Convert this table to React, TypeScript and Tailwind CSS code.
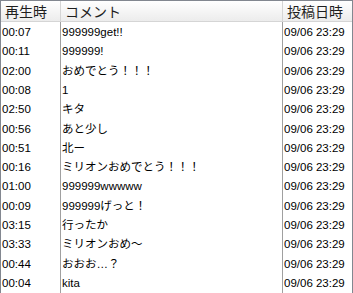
import React from 'react';

interface Comment {
  time: string;
  text: string;
  posted: string;
}

const ROWS: Comment[] = [
  { time: '00:07', text: '999999get!!', posted: '09/06 23:29' },
  { time: '00:11', text: '999999!', posted: '09/06 23:29' },
  { time: '02:00', text: 'おめでとう！！！', posted: '09/06 23:29' },
  { time: '00:08', text: '1', posted: '09/06 23:29' },
  { time: '02:50', text: 'キタ', posted: '09/06 23:29' },
  { time: '00:56', text: 'あと少し', posted: '09/06 23:29' },
  { time: '00:51', text: '北ー', posted: '09/06 23:29' },
  { time: '00:16', text: 'ミリオンおめでとう！！！', posted: '09/06 23:29' },
  { time: '01:00', text: '999999wwwww', posted: '09/06 23:29' },
  { time: '00:09', text: '999999げっと！', posted: '09/06 23:29' },
  { time: '03:15', text: '行ったか', posted: '09/06 23:29' },
  { time: '03:33', text: 'ミリオンおめ～', posted: '09/06 23:29' },
  { time: '00:44', text: 'おおお…？', posted: '09/06 23:29' },
  { time: '00:04', text: 'kita', posted: '09/06 23:29' },
];

const HEAD_FONT = "font-['Noto_Sans_CJK_JP',sans-serif]";
const BODY_FONT = "font-['Liberation_Sans','Noto_Sans_CJK_JP',sans-serif]";
const HEAD = 'h-[20px] flex items-center px-[4px] text-[14px] text-[#1e1e1e] border-r border-[#d5d5d5]';
const CELL = 'h-[19.3px] flex items-center px-[1px] text-[11.5px] text-black whitespace-nowrap overflow-hidden';

export default function App() {
  return (
    <div className="w-[353px] h-[293px] bg-white border-l border-t border-r border-[#828790] overflow-hidden">
      <div className={`grid grid-cols-[60px_222px_1fr] bg-gradient-to-b from-white to-[#ececec] border-b border-[#d5d5d5] ${HEAD_FONT}`}>
        <div className={HEAD}>再生時</div>
        <div className={HEAD}>コメント</div>
        <div className={HEAD + ' border-r-0'}>投稿日時</div>
      </div>
      <div className={`grid grid-cols-[60px_222px_1fr] ${BODY_FONT}`}>
        <div className="border-r border-[#a0a0a0] pt-[1px]">
          {ROWS.map((r, i) => <div key={i} className={CELL}>{r.time}</div>)}
        </div>
        <div className="border-r border-[#a0a0a0] pt-[1px]">
          {ROWS.map((r, i) => <div key={i} className={CELL}>{r.text}</div>)}
        </div>
        <div className="pt-[1px]">
          {ROWS.map((r, i) => <div key={i} className={CELL}>{r.posted}</div>)}
        </div>
      </div>
    </div>
  );
}
